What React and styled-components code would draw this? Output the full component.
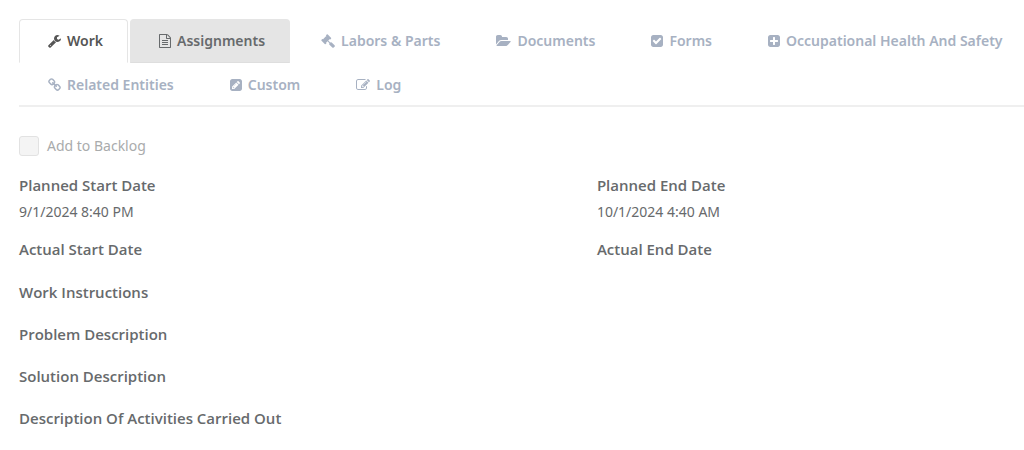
import React from "react";
import styled, { createGlobalStyle } from "styled-components";

const GlobalStyle = createGlobalStyle`
  * { box-sizing: border-box; }
  body {
    margin: 0;
    background: #fff;
    color: #676a6c;
    font-family: "Noto Sans", "Open Sans", sans-serif;
    font-size: 14px;
    line-height: 22px;
  }
`;

const Page = styled.main`
  padding: 19px 0 0 19px;
  overflow-x: clip;
`;

const TabStrip = styled.div`
  display: flex;
  flex-wrap: wrap;
  gap: 2px;
  margin-right: -16px;
  border-bottom: 2px solid #efefef;
`;

const Tab = styled.button`
  display: flex;
  align-items: center;
  gap: 6px;
  height: 44px;
  margin-bottom: -2px;
  padding: 0 24px 0 28px;
  border: 1px solid ${(p) => (p.$state === "active" || p.$state === "hover" ? "#e5e5e5" : "transparent")};
  border-bottom-color: ${(p) => (p.$state === "hover" ? "#dedede" : "transparent")};
  border-radius: 4px 4px 0 0;
  background: ${(p) => (p.$state === "hover" ? "#e5e5e5" : "transparent")};
  color: ${(p) => (p.$state === "active" ? "#555" : p.$state === "hover" ? "#676a6c" : "#a7b1c2")};
  font: inherit;
  font-weight: 600;
  white-space: nowrap;
  cursor: pointer;
`;

const Glyph = styled.svg`
  height: 14px;
  flex: none;
  fill: currentColor;
`;

const Panel = styled.section`
  padding-top: 28px;
`;

const CheckLabel = styled.label`
  display: flex;
  align-items: center;
  gap: 8px;
  margin-bottom: 17px;
  color: #a9abac;
`;

const Checkbox = styled.input`
  appearance: none;
  width: 20px;
  height: 20px;
  margin: 0;
  border: 1px solid #e2e2e2;
  border-radius: 3px;
  background: #f4f4f4;
`;

const Fields = styled.dl`
  display: grid;
  grid-template-columns: 23fr 17fr;
  margin: 0;
`;

const Field = styled.div`
  grid-column: ${(p) => (p.$wide ? "1 / -1" : "auto")};
  padding-bottom: ${(p) => (p.$wide ? 15 : 16)}px;
`;

const FieldName = styled.dt`
  margin-bottom: 5px;
  font-family: "Open Sans", "Noto Sans", sans-serif;
  font-size: 15px;
  font-weight: 600;
`;

const FieldValue = styled.dd`
  margin: 0;
  line-height: 21px;
`;

const square =
  "v960q0 119-84.5 203.5t-203.5 84.5h-960q-119 0-203.5-84.5t-84.5-203.5v-960q0-119 84.5-203.5t203.5-84.5h960q119 0 203.5 84.5t84.5 203.5z";

const icons = {
  wrench: {
    box: [64, 1664],
    d: "M448 1472q0-26-19-45t-45-19-45 19-19 45 19 45 45 19 45-19 19-45zm644-420l-682 682q-37 37-90 37-52 0-91-37l-106-108q-38-36-38-90 0-53 38-91l681-681q39 98 114.5 173.5t173.5 114.5zm634-435q0 39-23 106-47 134-164.5 217.5t-258.5 83.5q-185 0-316.5-131.5t-131.5-316.5 131.5-316.5 316.5-131.5q58 0 121.5 16.5t107.5 46.5q16 11 16 28t-16 28l-293 169v224l193 107q5-3 79-48.5t135.5-81 70.5-35.5q15 0 23.5 10t8.5 25z",
  },
  file: {
    box: [128, 1536],
    d: "M1596 380q28 28 48 76t20 88v1152q0 40-28 68t-68 28h-1344q-40 0-68-28t-28-68v-1600q0-40 28-68t68-28h896q40 0 88 20t76 48zm-444-244v376h376q-10-29-22-41l-313-313q-12-12-41-22zm384 1528v-1024h-416q-40 0-68-28t-28-68v-416h-768v1536h1280zm-1024-864q0-14 9-23t23-9h704q14 0 23 9t9 23v64q0 14-9 23t-23 9h-704q-14 0-23-9t-9-23v-64zm736 224q14 0 23 9t9 23v64q0 14-9 23t-23 9h-704q-14 0-23-9t-9-23v-64q0-14 9-23t23-9h704zm0 256q14 0 23 9t9 23v64q0 14-9 23t-23 9h-704q-14 0-23-9t-9-23v-64q0-14 9-23t23-9h704z",
  },
  gavel: {
    box: [0, 1792],
    d: "M1771 1536q0 53-37 90l-107 108q-39 37-91 37-53 0-90-37l-363-364q-38-36-38-90 0-53 43-96l-256-256-126 126q-14 14-34 14t-34-14q2 2 12.5 12t12.5 13 10 11.5 10 13.5 6 13.5 5.5 16.5 1.5 18q0 38-28 68-3 3-16.5 18t-19 20.5-18.5 16.5-22 15.5-22 9-26 4.5q-40 0-68-28l-408-408q-28-28-28-68 0-13 4.5-26t9-22 15.5-22 16.5-18.5 20.5-19 18-16.5q30-28 68-28 10 0 18 1.5t16.5 5.5 13.5 6 13.5 10 11.5 10 13 12.5 12 12.5q-14-14-14-34t14-34l348-348q14-14 34-14t34 14q-2-2-12.5-12t-12.5-13-10-11.5-10-13.5-6-13.5-5.5-16.5-1.5-18q0-38 28-68 3-3 16.5-18t19-20.5 18.5-16.5 22-15.5 22-9 26-4.5q40 0 68 28l408 408q28 28 28 68 0 13-4.5 26t-9 22-15.5 22-16.5 18.5-20.5 19-18 16.5q-30 28-68 28-10 0-18-1.5t-16.5-5.5-13.5-6-13.5-10-11.5-10-13-12.5-12-12.5q14 14 14 34t-14 34l-126 126 256 256q43-43 96-43 52 0 91 37l363 363q37 39 37 91z",
  },
  folder: {
    box: [0, 1920],
    d: "M1879 952q0 31-31 66l-336 396q-43 51-120.5 86.5t-143.5 35.5h-1088q-34 0-60.5-13t-26.5-43q0-31 31-66l336-396q43-51 120.5-86.5t143.5-35.5h1088q34 0 60.5 13t26.5 43zm-343-344v160h-832q-94 0-197 47.5t-164 119.5l-337 396-5 6q0-4-.5-12.5t-.5-12.5v-960q0-92 66-158t158-66h320q92 0 158 66t66 158v32h544q92 0 158 66t66 158z",
  },
  check: {
    box: [128, 1536],
    d: "M813 1299l614-614q19-19 19-45t-19-45l-102-102q-19-19-45-19t-45 19l-467 467-211-211q-19-19-45-19t-45 19l-102 102q-19 19-19 45t19 45l358 358q19 19 45 19t45-19zm851-883" + square,
  },
  plus: {
    box: [128, 1536],
    d: "M1408 960v-128q0-26-19-45t-45-19h-320v-320q0-26-19-45t-45-19h-128q-26 0-45 19t-19 45v320h-320q-26 0-45 19t-19 45v128q0 26 19 45t45 19h320v320q0 26 19 45t45 19h128q26 0 45-19t19-45v-320h320q26 0 45-19t19-45zm256-544" + square,
  },
  link: {
    box: [64, 1664],
    d: "M1520 1216q0-40-28-68l-208-208q-28-28-68-28-42 0-72 32 3 3 19 18.5t21.5 21.5 15 19 13 25.5 3.5 27.5q0 40-28 68t-68 28q-15 0-27.5-3.5t-25.5-13-19-15-21.5-21.5-18.5-19q-33 31-33 73 0 40 28 68l206 207q27 27 68 27 40 0 68-26l147-146q28-28 28-67zm-703-705q0-40-28-68l-206-207q-28-28-68-28-39 0-68 27l-147 146q-28 28-28 67 0 40 28 68l208 208q27 27 68 27 42 0 72-31-3-3-19-18.5t-21.5-21.5-15-19-13-25.5-3.5-27.5q0-40 28-68t68-28q15 0 27.5 3.5t25.5 13 19 15 21.5 21.5 18.5 19q33-31 33-73zm895 705q0 120-85 203l-147 146q-83 83-203 83-121 0-204-85l-206-207q-83-83-83-203 0-123 88-209l-88-88q-86 88-208 88-120 0-204-84l-208-208q-84-84-84-204t85-203l147-146q83-83 203-83 121 0 204 85l206 207q83 83 83 203 0 123-88 209l88 88q86-88 208-88 120 0 204 84l208 208q84 84 84 204z",
  },
  pencil: {
    box: [0, 1536],
    d: "M404 1108l152 152-52 52h-56v-96h-96v-56zm414-390q14 13-3 30l-291 291q-17 17-30 3-14-13 3-30l291-291q17-17 30-3zm-274 690l544-544-288-288-544 544v288h288zm608-608l92-92q28-28 28-68t-28-68l-152-152q-28-28-68-28t-68 28l-92 92zm384-384" + square,
  },
  edit: {
    box: [0, 1792],
    d: "M888 1184l116-116-152-152-116 116v56h96v96h56zm440-720q-16-16-33 1l-350 350q-17 17-1 33t33-1l350-350q17-17 1-33zm80 594v190q0 119-84.5 203.5t-203.5 84.5h-832q-119 0-203.5-84.5t-84.5-203.5v-832q0-119 84.5-203.5t203.5-84.5h832q63 0 117 25 15 7 18 23 3 17-9 29l-49 49q-14 14-32 8-23-6-45-6h-832q-66 0-113 47t-47 113v832q0 66 47 113t113 47h832q66 0 113-47t47-113v-126q0-13 9-22l64-64q15-15 35-7t20 29zm-96-738l288 288-672 672h-288v-288zm444 132l-92 92-288-288 92-92q28-28 68-28t68 28l152 152q28 28 28 68t-28 68z",
  },
};

function Icon({ name }) {
  const { box, d } = icons[name];
  return (
    <Glyph viewBox={`${box[0]} 0 ${box[1]} 1792`} width={box[1] / 128} aria-hidden="true">
      <path d={d} />
    </Glyph>
  );
}

const tabs = [
  { label: "Work", icon: "wrench", state: "active" },
  { label: "Assignments", icon: "file", state: "hover" },
  { label: "Labors & Parts", icon: "gavel" },
  { label: "Documents", icon: "folder" },
  { label: "Forms", icon: "check" },
  { label: "Occupational Health And Safety", icon: "plus" },
  { label: "Related Entities", icon: "link" },
  { label: "Custom", icon: "pencil" },
  { label: "Log", icon: "edit" },
];

const fields = [
  { name: "Planned Start Date", value: "9/1/2024 8:40 PM" },
  { name: "Planned End Date", value: "10/1/2024 4:40 AM" },
  { name: "Actual Start Date" },
  { name: "Actual End Date" },
  { name: "Work Instructions", wide: true },
  { name: "Problem Description", wide: true },
  { name: "Solution Description", wide: true },
  { name: "Description Of Activities Carried Out", wide: true },
];

export default function App() {
  return (
    <Page>
      <GlobalStyle />
      <TabStrip role="tablist">
        {tabs.map((t) => (
          <Tab key={t.label} type="button" role="tab" aria-selected={t.state === "active"} $state={t.state}>
            <Icon name={t.icon} />
            {t.label}
          </Tab>
        ))}
      </TabStrip>
      <Panel>
        <CheckLabel htmlFor="backlog">
          <Checkbox id="backlog" type="checkbox" disabled />
          Add to Backlog
        </CheckLabel>
        <Fields>
          {fields.map((f) => (
            <Field key={f.name} $wide={f.wide}>
              <FieldName>{f.name}</FieldName>
              {f.value && <FieldValue>{f.value}</FieldValue>}
            </Field>
          ))}
        </Fields>
      </Panel>
    </Page>
  );
}
